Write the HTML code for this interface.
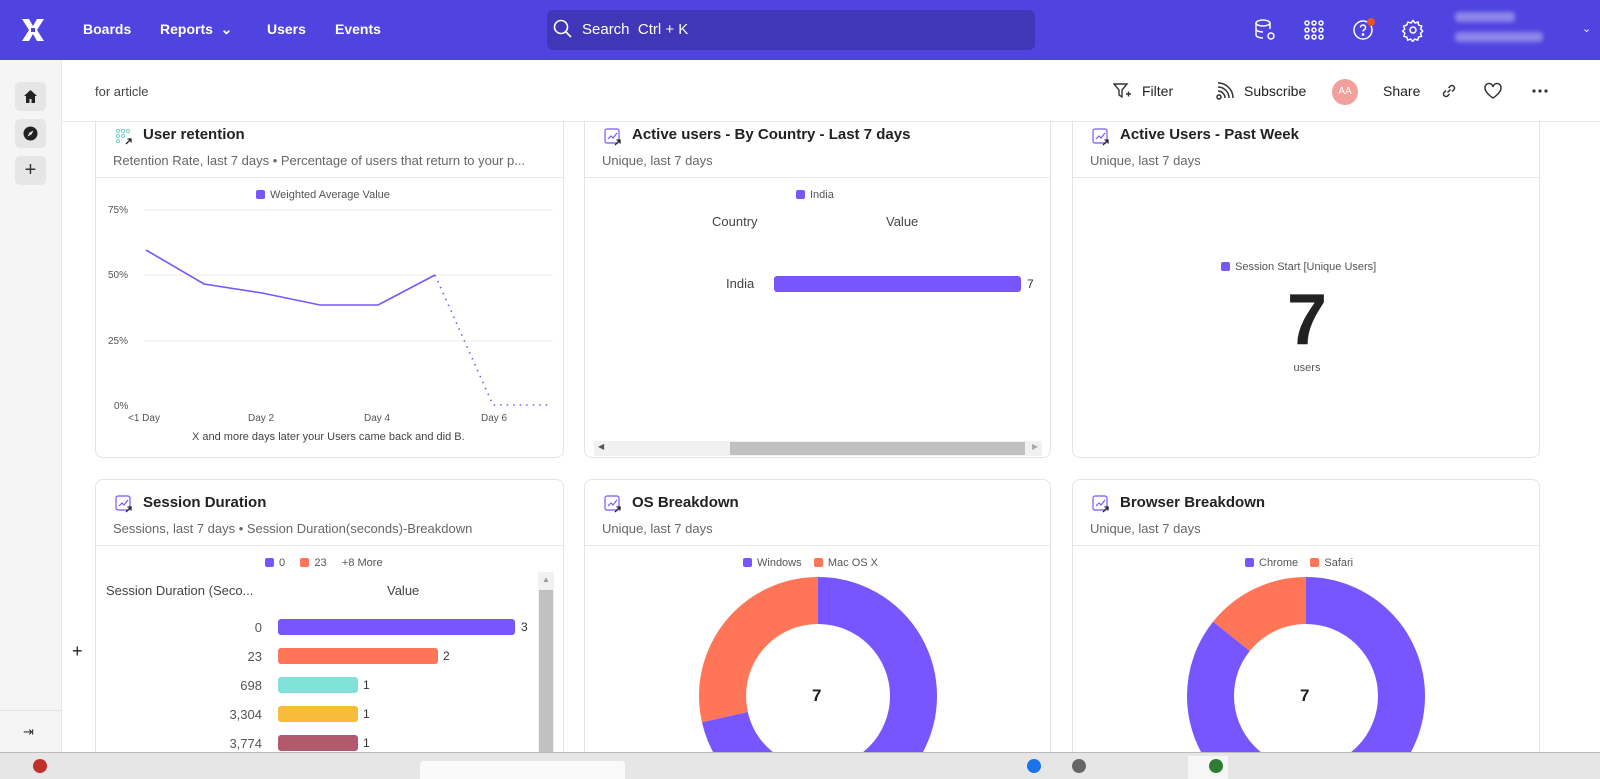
<!DOCTYPE html>
<html><head><meta charset="utf-8">
<style>
*{box-sizing:border-box;margin:0;padding:0}
html,body{width:1600px;height:779px;overflow:hidden}
body{font-family:"Liberation Sans",sans-serif;background:#fff;position:relative;color:#222}
#wrap{position:absolute;left:0;top:0;width:1600px;height:779px;overflow:hidden}
.abs{position:absolute}
.nav{left:0;top:0;width:1600px;height:60px;background:#4f44e0}
.nav .lnk{position:absolute;top:21px;color:#fff;font-size:14px;font-weight:bold}
.side{left:0;top:60px;width:62px;height:692px;background:#f5f5f5;border-right:1px solid #e6e6e6}
.sbtn{position:absolute;left:15px;width:31px;height:29px;background:#e6e6e6;border-radius:5px}
.sub{left:62px;top:60px;width:1538px;height:62px;background:#fff;border-bottom:1px solid #e8e8e8;z-index:5}
.card{position:absolute;border:1px solid #e4e4e4;border-radius:8px;background:#fff;overflow:hidden}
.t{position:absolute;font-size:15px;font-weight:bold;color:#222}
.s{position:absolute;font-size:13px;color:#666}
.div{position:absolute;left:0;right:0;height:1px;background:#e8e8e8}
.lg{position:absolute;font-size:11px;color:#555;white-space:nowrap}
.sq{display:inline-block;width:9px;height:9px;border-radius:2px;vertical-align:-1px;margin-right:5px}
.ax{position:absolute;font-size:10px;color:#555}
.bar{position:absolute;height:16px;border-radius:3px}
.rl{position:absolute;font-size:13px;color:#555;text-align:right;width:80px}
.vl{position:absolute;font-size:12px;color:#333}
</style></head><body><div id="wrap">
<div class="abs nav">
  <svg class="abs" style="left:19px;top:16px" width="28" height="28" viewBox="0 0 28 28"><path d="M3 3 L10 3 L14 10 L18 3 L25 3 L18 14 L25 25 L18 25 L14 18 L10 25 L3 25 L10 14 Z" fill="#fff"/><rect x="12" y="12" width="4" height="4" fill="#4f44e0"/></svg>
  <span class="lnk" style="left:83px">Boards</span>
  <span class="lnk" style="left:160px">Reports &nbsp;⌄</span>
  <span class="lnk" style="left:267px">Users</span>
  <span class="lnk" style="left:335px">Events</span>
  <div class="abs" style="left:547px;top:10px;width:488px;height:40px;background:#4037b8;border-radius:6px"></div>
  <svg class="abs" style="left:553px;top:19px" width="20" height="20" viewBox="0 0 20 20"><circle cx="8" cy="8" r="6.5" stroke="#fff" stroke-width="1.6" fill="none"/><path d="M13 13 L18 18" stroke="#fff" stroke-width="1.6"/></svg>
  <span class="abs" style="left:582px;top:21px;color:#fff;font-size:15px">Search&nbsp; Ctrl + K</span>
  <svg class="abs" style="left:1253px;top:18px" width="24" height="24" viewBox="0 0 24 24" fill="none" stroke="#fff" stroke-width="1.5"><ellipse cx="10" cy="5" rx="7" ry="3"/><path d="M3 5v12c0 1.6 3 3 7 3M17 5v6M3 11c0 1.6 3 3 7 3"/><circle cx="18" cy="18" r="3"/></svg>
  <svg class="abs" style="left:1303px;top:19px" width="22" height="22" viewBox="0 0 22 22" fill="none" stroke="#fff" stroke-width="1.5"><circle cx="4" cy="4" r="2"/><circle cx="11" cy="4" r="2"/><circle cx="18" cy="4" r="2"/><circle cx="4" cy="11" r="2"/><circle cx="11" cy="11" r="2"/><circle cx="18" cy="11" r="2"/><circle cx="4" cy="18" r="2"/><circle cx="11" cy="18" r="2"/><circle cx="18" cy="18" r="2"/></svg>
  <svg class="abs" style="left:1352px;top:17px" width="26" height="26" viewBox="0 0 26 26" fill="none" stroke="#fff" stroke-width="1.5"><circle cx="11" cy="13" r="9"/><path d="M8.5 10.5a2.5 2.5 0 1 1 3.5 2.3c-.7.4-1 .9-1 1.7"/><circle cx="11" cy="17.5" r=".6" fill="#fff"/><circle cx="19" cy="5" r="4" fill="#e8502f" stroke="none"/></svg>
  <svg class="abs" style="left:1401px;top:18px" width="24" height="24" viewBox="0 0 24 24" fill="none" stroke="#fff" stroke-width="1.5"><circle cx="12" cy="12" r="3"/><path d="M12 2.5l2 2.5 3-1 .7 3.1 3 1-1 3 2 2-2.2 2.2 1 3-3 .8-.8 3-3-1-2 2.4-2-2.4-3 1-.8-3-3-.8 1-3-2.2-2.2 2-2-1-3 3-1L7 4l3 1z"/></svg>
  <div class="abs" style="left:1455px;top:12px;width:60px;height:10px;background:#8d87ea;border-radius:4px;filter:blur(2px)"></div>
  <div class="abs" style="left:1455px;top:32px;width:88px;height:10px;background:#8d87ea;border-radius:4px;filter:blur(2px)"></div>
  <span class="abs" style="left:1582px;top:22px;color:#fff;font-size:11px">⌄</span>
</div>
<div class="abs side">
  <div class="sbtn" style="top:22px"><svg style="margin:7px 8px" width="15" height="15" viewBox="0 0 15 15"><path d="M7.5 1L1 7h2v7h3.5v-4h2v4H12V7h2z" fill="#222"/></svg></div>
  <div class="sbtn" style="top:59px"><svg style="margin:7px 8px" width="15" height="15" viewBox="0 0 15 15"><circle cx="7.5" cy="7.5" r="7" fill="#222"/><path d="M10.5 4.5L8.5 8.5 4.5 10.5 6.5 6.5z" fill="#e6e6e6"/></svg></div>
  <div class="sbtn" style="top:96px;text-align:center;font-size:20px;line-height:28px;color:#333">+</div>
  <div class="abs" style="left:0;top:650px;width:62px;height:1px;background:#e2e2e2"></div>
  <span class="abs" style="left:23px;top:664px;font-size:13px;color:#333">⇥</span>
</div>
<span class="abs" style="left:72px;top:641px;font-size:18px;color:#222">+</span>
<div class="abs sub">
  <span class="abs" style="left:33px;top:24px;font-size:13px;color:#444">for article</span>
  <svg class="abs" style="left:1051px;top:22px" width="20" height="18" viewBox="0 0 20 18" fill="none" stroke="#333" stroke-width="1.4"><path d="M1 2h13l-5 6v7l-3-2V8z"/><path d="M13 12h5M15.5 9.5v5"/></svg>
  <span class="abs" style="left:1080px;top:23px;font-size:14px;color:#222">Filter</span>
  <svg class="abs" style="left:1153px;top:21px" width="20" height="20" viewBox="0 0 20 20" fill="none" stroke="#333" stroke-width="1.5"><circle cx="4" cy="16" r="2"/><path d="M3 10a7 7 0 0 1 7 7M3 6a11 11 0 0 1 11 11M3 2a15 15 0 0 1 15 15"/></svg>
  <span class="abs" style="left:1182px;top:23px;font-size:14px;color:#222">Subscribe</span>
  <div class="abs" style="left:1270px;top:19px;width:26px;height:26px;border-radius:50%;background:#f4a09a;color:#fff;font-size:10px;text-align:center;line-height:26px">AA</div>
  <span class="abs" style="left:1321px;top:23px;font-size:14px;color:#222">Share</span>
  <svg class="abs" style="left:1378px;top:22px" width="18" height="18" viewBox="0 0 18 18" fill="none" stroke="#333" stroke-width="1.5"><path d="M7.5 10.5l3-3M6 8.5l-2 2a2.5 2.5 0 0 0 3.5 3.5l2-2M12 9.5l2-2A2.5 2.5 0 0 0 10.5 4l-2 2"/></svg>
  <svg class="abs" style="left:1421px;top:22px" width="20" height="18" viewBox="0 0 20 18" fill="none" stroke="#333" stroke-width="1.5"><path d="M10 16S2 11 2 6a4 4 0 0 1 8-1 4 4 0 0 1 8 1c0 5-8 10-8 10z"/></svg>
  <svg class="abs" style="left:1470px;top:29px" width="16" height="4" viewBox="0 0 16 4" fill="#333"><circle cx="2" cy="2" r="1.6"/><circle cx="8" cy="2" r="1.6"/><circle cx="14" cy="2" r="1.6"/></svg>
</div>

<!-- Row 1 -->
<div class="card" style="left:95px;top:100px;width:469px;height:358px">
  <svg class="abs" style="left:19px;top:27px" width="18" height="18" viewBox="0 0 18 18" fill="none" stroke="#6fd0cc" stroke-width="1"><circle cx="3" cy="3" r="1.6"/><circle cx="8" cy="3" r="1.6"/><circle cx="13" cy="3" r="1.6"/><circle cx="3" cy="8" r="1.6"/><circle cx="8" cy="8" r="1.6"/><circle cx="3" cy="13" r="1.6"/><path d="M11 16l5-5M12.5 11H16v3.5" stroke="#222" stroke-width="1.3"/></svg>
  <span class="t" style="left:47px;top:25px">User retention</span>
  <span class="s" style="left:17px;top:52px">Retention Rate, last 7 days • Percentage of users that return to your p...</span>
  <div class="div" style="top:76px"></div>
  <span class="lg" style="left:160px;top:88px"><span class="sq" style="background:#7856ff"></span>Weighted Average Value</span>
  <svg class="abs" style="left:0;top:0" width="469" height="358">
    <g stroke="#eee"><line x1="48" y1="109" x2="457" y2="109"/><line x1="48" y1="174" x2="457" y2="174"/><line x1="48" y1="240" x2="457" y2="240"/></g>
    <polyline points="50,149 108,183 166,192 224,204 282,204 339,174" fill="none" stroke="#7856ff" stroke-width="1.6"/>
    <polyline points="339,174 397,304 455,304" fill="none" stroke="#7856ff" stroke-width="1.6" stroke-dasharray="1.5 5"/>
  </svg>
  <span class="ax" style="left:12px;top:104px">75%</span>
  <span class="ax" style="left:12px;top:169px">50%</span>
  <span class="ax" style="left:12px;top:235px">25%</span>
  <span class="ax" style="left:18px;top:300px">0%</span>
  <span class="ax" style="left:32px;top:312px">&lt;1 Day</span>
  <span class="ax" style="left:152px;top:312px">Day 2</span>
  <span class="ax" style="left:268px;top:312px">Day 4</span>
  <span class="ax" style="left:385px;top:312px">Day 6</span>
  <span class="abs" style="left:96px;top:330px;font-size:11px;color:#444">X and more days later your Users came back and did B.</span>
</div>

<div class="card" style="left:584px;top:100px;width:467px;height:358px">
  <svg class="abs" style="left:19px;top:27px" width="18" height="18" viewBox="0 0 18 18" fill="none" stroke="#7856ff" stroke-width="1.2"><rect x="1" y="1" width="14" height="14" rx="2"/><path d="M4 11l3-3 2 2 4-5"/><path d="M11 17l5-5M12.5 12H16v3.5" stroke="#222" stroke-width="1.3"/></svg>
  <span class="t" style="left:47px;top:25px">Active users - By Country - Last 7 days</span>
  <span class="s" style="left:17px;top:52px">Unique, last 7 days</span>
  <div class="div" style="top:76px"></div>
  <span class="lg" style="left:211px;top:88px"><span class="sq" style="background:#7856ff"></span>India</span>
  <span class="abs" style="left:127px;top:113px;font-size:13px;color:#444">Country</span>
  <span class="abs" style="left:301px;top:113px;font-size:13px;color:#444">Value</span>
  <span class="abs" style="left:141px;top:175px;font-size:13px;color:#444">India</span>
  <div class="bar" style="left:189px;top:175px;width:247px;background:#7856ff"></div>
  <span class="vl" style="left:442px;top:176px">7</span>
  <div class="abs" style="left:9px;top:340px;width:448px;height:15px;background:#f1f1f1"></div>
  <div class="abs" style="left:145px;top:341px;width:295px;height:13px;background:#c1c1c1"></div>
  <span class="abs" style="left:13px;top:341px;font-size:8px;color:#555">◀</span>
  <span class="abs" style="left:447px;top:341px;font-size:8px;color:#aaa">▶</span>
</div>

<div class="card" style="left:1072px;top:100px;width:468px;height:358px">
  <svg class="abs" style="left:19px;top:27px" width="18" height="18" viewBox="0 0 18 18" fill="none" stroke="#7856ff" stroke-width="1.2"><rect x="1" y="1" width="14" height="14" rx="2"/><path d="M4 11l3-3 2 2 4-5"/><path d="M11 17l5-5M12.5 12H16v3.5" stroke="#222" stroke-width="1.3"/></svg>
  <span class="t" style="left:47px;top:25px">Active Users - Past Week</span>
  <span class="s" style="left:17px;top:52px">Unique, last 7 days</span>
  <div class="div" style="top:76px"></div>
  <span class="lg" style="left:148px;top:160px"><span class="sq" style="background:#7856ff"></span>Session Start [Unique Users]</span>
  <span class="abs" style="left:0;width:468px;text-align:center;top:178px;font-size:72px;font-weight:bold;color:#222">7</span>
  <span class="abs" style="left:0;width:468px;text-align:center;top:261px;font-size:11px;color:#555">users</span>
</div>

<!-- Row 2 -->
<div class="card" style="left:95px;top:479px;width:469px;height:300px">
  <svg class="abs" style="left:19px;top:15px" width="18" height="18" viewBox="0 0 18 18" fill="none" stroke="#7856ff" stroke-width="1.2"><rect x="1" y="1" width="14" height="14" rx="2"/><path d="M4 11l3-3 2 2 4-5"/><path d="M11 17l5-5M12.5 12H16v3.5" stroke="#222" stroke-width="1.3"/></svg>
  <span class="t" style="left:47px;top:14px">Session Duration</span>
  <span class="s" style="left:17px;top:41px">Sessions, last 7 days • Session Duration(seconds)-Breakdown</span>
  <div class="div" style="top:65px"></div>
  <span class="lg" style="left:169px;top:77px"><span class="sq" style="background:#7856ff"></span>0 &nbsp;&nbsp;&nbsp;&nbsp;<span class="sq" style="background:#ff7557"></span>23 &nbsp;&nbsp;&nbsp;&nbsp;+8 More</span>
  <span class="abs" style="left:10px;top:103px;font-size:13px;color:#444">Session Duration (Seco...</span>
  <span class="abs" style="left:291px;top:103px;font-size:13px;color:#444">Value</span>
  <span class="rl" style="left:86px;top:140px">0</span><div class="bar" style="left:182px;top:139px;width:237px;background:#7856ff"></div><span class="vl" style="left:425px;top:140px">3</span>
  <span class="rl" style="left:86px;top:169px">23</span><div class="bar" style="left:182px;top:168px;width:160px;background:#ff7557"></div><span class="vl" style="left:347px;top:169px">2</span>
  <span class="rl" style="left:86px;top:198px">698</span><div class="bar" style="left:182px;top:197px;width:80px;background:#80e1d9"></div><span class="vl" style="left:267px;top:198px">1</span>
  <span class="rl" style="left:86px;top:227px">3,304</span><div class="bar" style="left:182px;top:226px;width:80px;background:#f8bc3b"></div><span class="vl" style="left:267px;top:227px">1</span>
  <span class="rl" style="left:86px;top:256px">3,774</span><div class="bar" style="left:182px;top:255px;width:80px;background:#b2596e"></div><span class="vl" style="left:267px;top:256px">1</span>
  <div class="abs" style="left:442px;top:92px;width:16px;height:190px;background:#f1f1f1"></div>
  <div class="abs" style="left:443px;top:110px;width:14px;height:172px;background:#c1c1c1"></div>
  <span class="abs" style="left:446px;top:95px;font-size:8px;color:#999">▲</span>
</div>

<div class="card" style="left:584px;top:479px;width:467px;height:300px">
  <svg class="abs" style="left:19px;top:15px" width="18" height="18" viewBox="0 0 18 18" fill="none" stroke="#7856ff" stroke-width="1.2"><rect x="1" y="1" width="14" height="14" rx="2"/><path d="M4 11l3-3 2 2 4-5"/><path d="M11 17l5-5M12.5 12H16v3.5" stroke="#222" stroke-width="1.3"/></svg>
  <span class="t" style="left:47px;top:14px">OS Breakdown</span>
  <span class="s" style="left:17px;top:41px">Unique, last 7 days</span>
  <div class="div" style="top:65px"></div>
  <span class="lg" style="left:158px;top:77px"><span class="sq" style="background:#7856ff"></span>Windows &nbsp;&nbsp;&nbsp;<span class="sq" style="background:#ff7557"></span>Mac OS X</span>
  <svg class="abs" style="left:113px;top:96px" width="240" height="240" viewBox="0 0 240 240">
    <g transform="rotate(-90 120 120)" fill="none" stroke-width="47">
      <circle cx="120" cy="120" r="95.5" stroke="#7856ff" stroke-dasharray="428.6 600"/>
      <circle cx="120" cy="120" r="95.5" stroke="#ff7557" stroke-dasharray="171.4 600" stroke-dashoffset="-428.6"/>
    </g>
  </svg>
  <span class="abs" style="left:227px;top:206px;font-size:17px;font-weight:bold;color:#222">7</span>
</div>

<div class="card" style="left:1072px;top:479px;width:468px;height:300px">
  <svg class="abs" style="left:19px;top:15px" width="18" height="18" viewBox="0 0 18 18" fill="none" stroke="#7856ff" stroke-width="1.2"><rect x="1" y="1" width="14" height="14" rx="2"/><path d="M4 11l3-3 2 2 4-5"/><path d="M11 17l5-5M12.5 12H16v3.5" stroke="#222" stroke-width="1.3"/></svg>
  <span class="t" style="left:47px;top:14px">Browser Breakdown</span>
  <span class="s" style="left:17px;top:41px">Unique, last 7 days</span>
  <div class="div" style="top:65px"></div>
  <span class="lg" style="left:172px;top:77px"><span class="sq" style="background:#7856ff"></span>Chrome &nbsp;&nbsp;&nbsp;<span class="sq" style="background:#ff7557"></span>Safari</span>
  <svg class="abs" style="left:113px;top:96px" width="240" height="240" viewBox="0 0 240 240">
    <g transform="rotate(-90 120 120)" fill="none" stroke-width="47">
      <circle cx="120" cy="120" r="95.5" stroke="#7856ff" stroke-dasharray="514.3 600"/>
      <circle cx="120" cy="120" r="95.5" stroke="#ff7557" stroke-dasharray="85.7 600" stroke-dashoffset="-514.3"/>
    </g>
  </svg>
  <span class="abs" style="left:227px;top:206px;font-size:17px;font-weight:bold;color:#222">7</span>
</div>

<!-- taskbar -->
<div class="abs" style="left:0;top:752px;width:1600px;height:27px;background:#e6e6e6;border-top:1px solid #bbb;z-index:9;overflow:hidden">
  <div class="abs" style="left:33px;top:6px;width:14px;height:14px;border-radius:50%;background:#c0302a"></div>
  <div class="abs" style="left:420px;top:8px;width:205px;height:20px;background:#fafafa;border-radius:3px"></div>
  <div class="abs" style="left:1027px;top:6px;width:14px;height:14px;border-radius:50%;background:#1a73e8"></div>
  <div class="abs" style="left:1072px;top:6px;width:14px;height:14px;border-radius:50%;background:#666"></div>
  <div class="abs" style="left:1188px;top:3px;width:40px;height:24px;background:#f6f6f6"></div>
  <div class="abs" style="left:1209px;top:6px;width:14px;height:14px;border-radius:50%;background:#2e7d32"></div>
</div>
</div></body></html>
